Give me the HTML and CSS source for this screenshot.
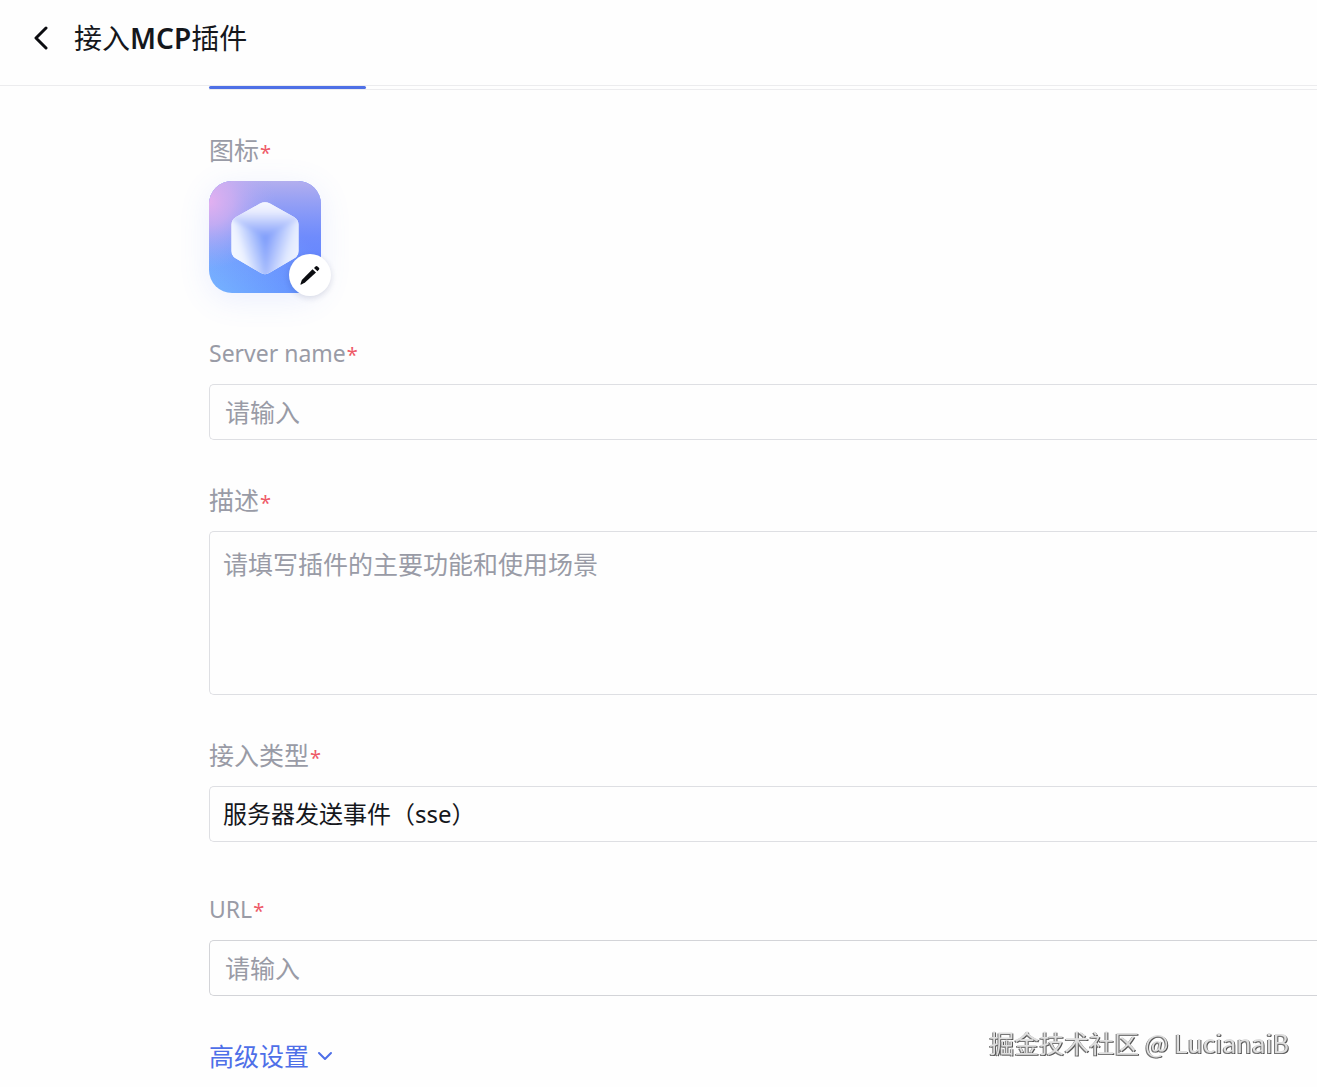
FILE: index.html
```html
<!DOCTYPE html>
<html lang="zh-CN">
<head>
<meta charset="utf-8">
<meta name="viewport" content="width=device-width, initial-scale=1">
<title>接入MCP插件</title>
<link rel="stylesheet" href="styles.css">
</head>
<body>
<header class="topbar">
  <button class="back" type="button" aria-label="返回">
    <svg width="16" height="24" viewBox="0 0 16 24" fill="none" stroke="#0b0c10" stroke-width="3" stroke-linecap="round" stroke-linejoin="round"><path d="M14 2 4 12 14 22"/></svg>
  </button>
  <h1 class="title">接入<span class="title-latin">MCP</span>插件</h1>
</header>
<main class="page">
  <div class="tabs"><div class="tab-indicator"></div></div>
  <form class="form">
    <div class="field">
      <span class="label">图标<span class="required">*</span></span>
      <div class="avatar">
        <svg class="avatar-art" width="112" height="112" viewBox="0 0 112 112">
          <defs>
            <linearGradient id="base" x1="0.1" y1="1" x2="0.75" y2="0.4"><stop offset="0" stop-color="#74b0ff"/><stop offset="1" stop-color="#5c80ff"/></linearGradient>
            <linearGradient id="sky" x1="0" y1="0" x2="0" y2="1"><stop offset="0" stop-color="#b3aeee"/><stop offset="0.5" stop-color="#9aa6f6" stop-opacity="0.3"/><stop offset="1" stop-color="#8fa8ff" stop-opacity="0"/></linearGradient>
            <radialGradient id="pink" cx="0" cy="0.18" r="0.6"><stop offset="0" stop-color="#e3b0f0"/><stop offset="0.35" stop-color="#d2aef1" stop-opacity="0.8"/><stop offset="1" stop-color="#a9a9f5" stop-opacity="0"/></radialGradient>
            <linearGradient id="top" x1="0" y1="0" x2="0" y2="1"><stop offset="0" stop-color="#fff"/><stop offset="0.4" stop-color="#e8ecfe"/><stop offset="1" stop-color="#7f9cfb"/></linearGradient>
            <linearGradient id="left" x1="0" y1="0.8" x2="1" y2="0.3"><stop offset="0" stop-color="#fff"/><stop offset="0.45" stop-color="#eef3ff"/><stop offset="1" stop-color="#7799fb"/></linearGradient>
            <linearGradient id="right" x1="1" y1="0.8" x2="0" y2="0.3"><stop offset="0" stop-color="#fff"/><stop offset="0.45" stop-color="#e2eaff"/><stop offset="1" stop-color="#7796fb"/></linearGradient>
            <clipPath id="hex"><path d="M51 22.500Q56 20 61 22.500L85 36Q89.500 38.500 89.500 43.500V70Q89.500 75 85 77.500L61 91.500Q56 95 51 91.500L27 77.500Q22.500 75 22.500 70V43.500Q22.500 38.500 27 36Z"/></clipPath>
            <filter id="soft" x="-20%" y="-20%" width="140%" height="140%"><feGaussianBlur stdDeviation="2"/></filter>
          </defs>
          <rect width="112" height="112" rx="23" fill="url(#base)"/>
          <rect width="112" height="112" rx="23" fill="url(#sky)"/>
          <rect width="112" height="112" rx="23" fill="url(#pink)"/>
          <g clip-path="url(#hex)">
            <path fill="#eef2ff" d="M20 16h72v80H20z"/>
            <g filter="url(#soft)">
              <path fill="url(#left)" d="M14 32 56 55V102L14 80z"/>
              <path fill="url(#right)" d="M98 32 56 55V102L98 80z"/>
              <path fill="url(#top)" d="M56 14 98 34 56 56 14 34z"/>
            </g>
          </g>
        </svg>
        <button class="edit" type="button" aria-label="编辑图标">
          <svg width="24" height="24" viewBox="0 0 24 24" fill="#0b0c10"><path d="M14.500 6.200 18 9.500 7 19.600 3.300 21.600Q2.300 22 2.500 20.900L3.800 17Z"/><path d="m16 4.900 1.500-1.500q1-1 2 0l1.400 1.400q1 1 0 2L19.400 8.200Z"/></svg>
        </button>
      </div>
    </div>
    <div class="field">
      <label class="label label-latin" for="server-name">Server name<span class="required">*</span></label>
      <input class="control" id="server-name" type="text" placeholder="请输入">
    </div>
    <div class="field">
      <label class="label" for="desc">描述<span class="required">*</span></label>
      <textarea class="control control-area" id="desc" placeholder="请填写插件的主要功能和使用场景"></textarea>
    </div>
    <div class="field field-type">
      <label class="label" for="type">接入类型<span class="required">*</span></label>
      <select class="control control-select" id="type"><option>服务器发送事件（sse）</option></select>
    </div>
    <div class="field">
      <label class="label label-latin" for="url">URL<span class="required">*</span></label>
      <input class="control control-url" id="url" type="text" placeholder="请输入">
    </div>
    <button class="advanced" type="button">高级设置
      <svg width="16" height="10" viewBox="0 0 16 10" fill="none" stroke="#4e6fe8" stroke-width="2" stroke-linecap="round" stroke-linejoin="round"><path d="M2 2 8 8 14 2"/></svg>
    </button>
  </form>
</main>
<div class="watermark">掘金技术社区 @ LucianaiB</div>
</body>
</html>
```
FILE: styles.css
```css
* { box-sizing: border-box; }

body {
  margin: 0;
  background: #fefefe;
  color: #15171c;
  font: 25px/36px "Noto Sans", "Noto Sans CJK SC", sans-serif;
}

button {
  margin: 0;
  padding: 0;
  border: 0;
  background: none;
  font: inherit;
  cursor: pointer;
}

.topbar {
  display: flex;
  align-items: center;
  gap: 24px;
  height: 86px;
  padding: 0 32px 10px;
  border-bottom: 1px solid #ececee;
}

.back {
  display: flex;
  width: 18px;
}

.title {
  margin: 0;
  font-size: 28px;
  font-weight: 400;
  line-height: 40px;
}

.title-latin {
  font-weight: 600;
}

.page {
  padding-left: 209px;
}

.tabs {
  height: 4px;
  border-bottom: 1px solid #ececee;
}

.tab-indicator {
  width: 157px;
  height: 3px;
  border-radius: 2px;
  background: #4e70e6;
}

.form {
  display: flex;
  flex-direction: column;
  gap: 42px;
  padding: 42px 0 10px;
}

.field {
  display: flex;
  flex-direction: column;
  gap: 13px;
}

.field-type {
  margin-bottom: 7px;
}

.label {
  height: 36px;
  color: #999ba6;
}

.label-latin {
  font-size: 23px;
}

.required {
  margin-left: 1px;
  color: #ee5a68;
  font-size: 20px;
  line-height: 20px;
}

.avatar {
  position: relative;
  width: 112px;
  height: 112px;
  border-radius: 23px;
  box-shadow: 0 6px 32px rgba(90, 125, 255, 0.12);
}

.avatar-art {
  display: block;
}

.edit {
  position: absolute;
  right: -10px;
  bottom: -3px;
  display: flex;
  align-items: center;
  justify-content: center;
  width: 42px;
  height: 42px;
  border-radius: 50%;
  background: #fff;
  box-shadow: 0 2px 6px rgba(20, 30, 80, 0.14);
}

.control {
  width: 100%;
  height: 56px;
  margin: 0;
  padding: 0 15px;
  border: 1px solid #dedfe3;
  border-right: 0;
  border-radius: 5px 0 0 5px;
  outline: 0;
  background: #fefefe;
  color: #15171c;
  font: inherit;
}

.control::placeholder {
  color: #999ba6;
  opacity: 1;
}

.control-area {
  display: block;
  height: 164px;
  padding: 14px 13px;
  resize: none;
}

.control-select {
  padding: 0 13px;
  appearance: none;
  font-size: 24px;
}

.control-url {
  border-color: #d3d4d8;
}

.advanced {
  display: flex;
  align-items: center;
  align-self: flex-start;
  gap: 8px;
  color: #4e6fe8;
}

.watermark {
  position: fixed;
  right: 28px;
  bottom: 27px;
  color: #dedede;
  font: 25px/36px "Noto Sans CJK SC", sans-serif;
  text-shadow: -1px 1px 0 #777, 1px 1px 0 #555;
  pointer-events: none;
}
```
